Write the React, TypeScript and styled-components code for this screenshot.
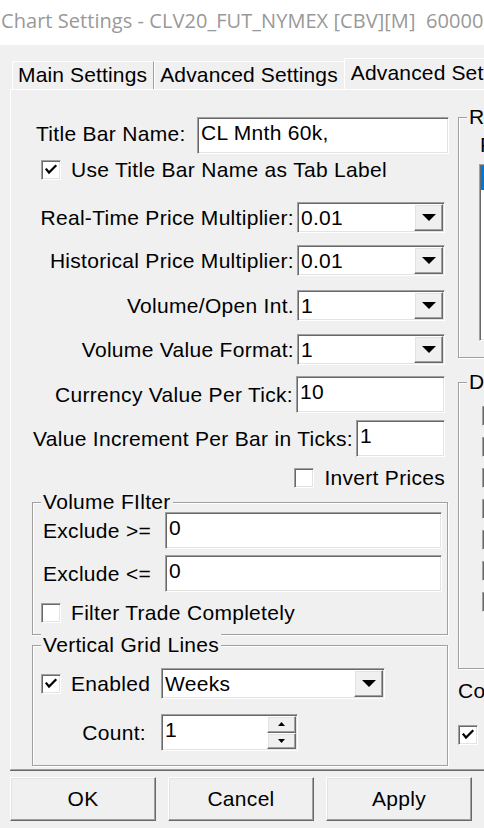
import styled, { createGlobalStyle, css } from 'styled-components';

const GlobalStyle = createGlobalStyle`
  html, body {
    margin: 0;
    padding: 0;
    background: #f0f0f0;
  }
  body {
    font-family: "Liberation Sans", Arial, sans-serif;
  }
`;

// classic 3D edges
const sunken = css`
  border: 1px solid;
  border-color: #a0a0a0 #ffffff #ffffff #a0a0a0;
  box-shadow: inset 1px 1px 0 #696969, inset -1px -1px 0 #e3e3e3;
`;

const raised = css`
  border: 1px solid;
  border-color: #ffffff #696969 #696969 #ffffff;
  box-shadow: inset -1px -1px 0 #a0a0a0, inset 1px 1px 0 #e3e3e3;
`;

const Window = styled.div`
  width: 484px;
  height: 828px;
  overflow: hidden;
  background: #f0f0f0;
  color: #000;
  font-family: "Liberation Sans", Arial, sans-serif;
  font-size: 21px;
  letter-spacing: 0.3px;
  display: flex;
  flex-direction: column;
`;

const TitleBar = styled.div`
  flex: none;
  height: 45px;
  box-sizing: border-box;
  padding: 8px 0 0 1px;
  background: #fff;
  color: #999;
  font-family: "Open Sans", "Noto Sans", sans-serif;
  font-size: 20px;
  letter-spacing: 0.05px;
  line-height: 26px;
  white-space: pre;
  overflow: hidden;
`;

const TabStrip = styled.div`
  flex: none;
  height: 44px;
  box-sizing: border-box;
  padding-left: 12px;
  display: flex;
  align-items: flex-end;
  letter-spacing: 0.15px;
`;

const Tab = styled.div<{ $active?: boolean }>`
  flex: none;
  box-sizing: border-box;
  height: ${p => (p.$active ? 31 : 28)}px;
  line-height: ${p => (p.$active ? 27 : 26)}px;
  padding: 0 ${p => (p.$active ? 0 : 6)}px 0 ${p => (p.$active ? 6 : 5)}px;
  margin-left: ${p => (p.$active ? -1 : 0)}px;
  white-space: nowrap;
  border-top: 1px solid #fff;
  border-left: 1px solid #fff;
  border-right: 1px solid #a0a0a0;
`;

const TabPanel = styled.div`
  flex: none;
  height: 681px;
  box-sizing: border-box;
  margin-left: 10px;
  display: flex;
  border-top: 1px solid #fff;
  border-left: 1px solid #fff;
  border-bottom: 1px solid #a0a0a0;
  box-shadow: 0 1px 0 #696969;
`;

const MainColumn = styled.div`
  flex: none;
  width: 439px;
  padding-top: 27px;
  display: flex;
  flex-direction: column;
`;

const SideColumn = styled.div`
  flex: none;
  width: 140px;
  padding: 27px 0 0 8px;
  display: flex;
  flex-direction: column;
`;

const FormRow = styled.div<{ $top: number; $left?: number; $right?: number; $end?: boolean; $gap?: number }>`
  display: flex;
  align-items: center;
  justify-content: ${p => (p.$end ? 'flex-end' : 'flex-start')};
  gap: ${p => p.$gap ?? 3}px;
  margin-top: ${p => p.$top}px;
  padding-left: ${p => p.$left ?? 0}px;
  padding-right: ${p => p.$right ?? 0}px;
`;

const Label = styled.span<{ $raise?: number }>`
  white-space: nowrap;
  line-height: 21px;
  margin-top: ${p => -2 * (p.$raise ?? 0)}px;
`;

const TextBox = styled.div<{ $width: number; $push?: boolean }>`
  ${sunken};
  flex: none;
  box-sizing: border-box;
  width: ${p => p.$width}px;
  height: 37px;
  padding: 4px 2px 0 3px;
  margin-left: ${p => (p.$push ? 'auto' : '0')};
  background: #fff;
  line-height: 21px;
  white-space: nowrap;
  overflow: hidden;
`;

const Combo = styled.div<{ $width: number; $push?: boolean }>`
  ${sunken};
  flex: none;
  box-sizing: border-box;
  width: ${p => p.$width}px;
  height: 31px;
  padding: 1px;
  margin-left: ${p => (p.$push ? 'auto' : '0')};
  background: #fff;
  display: flex;
`;

const ComboText = styled.span`
  flex: 1;
  padding-left: 2px;
  line-height: 27px;
  white-space: nowrap;
  overflow: hidden;
`;

const DropButton = styled.span`
  ${raised};
  flex: none;
  box-sizing: border-box;
  width: 29px;
  height: 27px;
  background: #f0f0f0;
  display: flex;
  align-items: center;
  justify-content: center;
`;

const SpinBox = styled.div`
  ${sunken};
  flex: none;
  box-sizing: border-box;
  width: 137px;
  height: 37px;
  padding: 1px;
  background: #fff;
  display: flex;
`;

const SpinText = styled.span`
  flex: 1;
  padding: 3px 0 0 2px;
  line-height: 21px;
`;

const SpinButtons = styled.span`
  flex: none;
  width: 29px;
  display: flex;
  flex-direction: column;
`;

const SpinButton = styled.span`
  ${raised};
  flex: 1;
  box-sizing: border-box;
  background: #f0f0f0;
  display: flex;
  align-items: center;
  justify-content: center;
`;

const CheckRow = styled.label<{ $top: number; $left: number; $right?: number; $bottom?: number; $end?: boolean }>`
  display: flex;
  align-items: center;
  justify-content: ${p => (p.$end ? 'flex-end' : 'flex-start')};
  gap: 10px;
  height: 20px;
  margin-top: ${p => p.$top}px;
  margin-bottom: ${p => p.$bottom ?? 0}px;
  padding-left: ${p => p.$left}px;
  padding-right: ${p => p.$right ?? 0}px;
  line-height: 20px;
  white-space: nowrap;
`;

const Box = styled.span`
  ${sunken};
  flex: none;
  box-sizing: border-box;
  width: 20px;
  height: 20px;
  background: #fff;
  display: flex;
  align-items: center;
  justify-content: center;
`;

const GroupBox = styled.div<{ $top: number; $left: number; $width: number; $height?: number }>`
  position: relative;
  flex: none;
  box-sizing: border-box;
  margin-top: ${p => p.$top}px;
  margin-left: ${p => p.$left}px;
  width: ${p => p.$width}px;
  ${p => (p.$height ? `height: ${p.$height}px;` : '')}
  border: 1px solid #a0a0a0;
  box-shadow: inset 1px 1px 0 #fff, 1px 1px 0 #fff;
  display: flex;
  flex-direction: column;
`;

const GroupTitle = styled.span`
  position: absolute;
  top: -12px;
  left: 8px;
  padding: 0 2px;
  background: #f0f0f0;
  line-height: 21px;
  white-space: nowrap;
`;

const SideLabel = styled.span<{ $top: number; $left: number }>`
  margin-top: ${p => p.$top}px;
  padding-left: ${p => p.$left}px;
  line-height: 21px;
  white-space: nowrap;
`;

const ListBox = styled.div`
  ${sunken};
  box-sizing: border-box;
  margin: 9px 0 0 20px;
  height: 177px;
  padding: 1px;
  background: #fff;
`;

const ListItem = styled.div<{ $selected?: boolean }>`
  height: 24px;
  background: ${p => (p.$selected ? '#0078d7' : 'transparent')};
`;

const CheckStack = styled.div`
  display: flex;
  flex-direction: column;
  gap: 11px;
  padding: 23px 0 0 23px;
`;

const ButtonRow = styled.div`
  flex: none;
  display: flex;
  gap: 12px;
  margin-top: 7px;
  padding-left: 10px;
`;

const PushButton = styled.button`
  ${raised};
  flex: none;
  box-sizing: border-box;
  width: 146px;
  height: 44px;
  padding: 0;
  background: #f0f0f0;
  color: #000;
  font: inherit;
  letter-spacing: inherit;
`;

function Arrow({ size, up }: { size: 'large' | 'small'; up?: boolean }) {
  const w = size === 'large' ? 14 : 7;
  const h = size === 'large' ? 7 : 4;
  const points = up ? `0,${h} ${w / 2},0 ${w},${h}` : `0,0 ${w},0 ${w / 2},${h}`;
  return (
    <svg width={w} height={h} viewBox={`0 0 ${w} ${h}`}>
      <polygon points={points} fill="#000" />
    </svg>
  );
}

function CheckBox({ checked }: { checked?: boolean }) {
  return (
    <Box>
      {checked && (
        <svg width="14" height="14" viewBox="0 0 14 14">
          <polyline points="2.5,6.5 5,9.5 11.5,3" fill="none" stroke="#000" strokeWidth="2.2" strokeLinecap="square" />
        </svg>
      )}
    </Box>
  );
}

function ComboBox({ value, width, push }: { value: string; width: number; push?: boolean }) {
  return (
    <Combo $width={width} $push={push}>
      <ComboText>{value}</ComboText>
      <DropButton>
        <Arrow size="large" />
      </DropButton>
    </Combo>
  );
}

export default function App() {
  return (
    <Window>
      <GlobalStyle />
      <TitleBar>{'Chart Settings - CLV20_FUT_NYMEX [CBV][M]  60000'}</TitleBar>

      <TabStrip>
        <Tab>Main Settings</Tab>
        <Tab>Advanced Settings</Tab>
        <Tab $active>Advanced Settings 2</Tab>
      </TabStrip>

      <TabPanel>
        <MainColumn>
          <FormRow $top={0} $left={25} $right={1}>
            <Label $raise={2}>Title Bar Name:</Label>
            <TextBox $width={252} $push>CL Mnth 60k,</TextBox>
          </FormRow>
          <CheckRow $top={6} $left={30}>
            <CheckBox checked />
            Use Title Bar Name as Tab Label
          </CheckRow>

          <FormRow $top={22} $right={5} $end>
            <Label>Real-Time Price Multiplier:</Label>
            <ComboBox value="0.01" width={148} />
          </FormRow>
          <FormRow $top={12} $right={5} $end>
            <Label>Historical Price Multiplier:</Label>
            <ComboBox value="0.01" width={148} />
          </FormRow>
          <FormRow $top={14} $right={5} $end>
            <Label>Volume/Open Int.</Label>
            <ComboBox value="1" width={148} />
          </FormRow>
          <FormRow $top={13} $right={5} $end>
            <Label>Volume Value Format:</Label>
            <ComboBox value="1" width={148} />
          </FormRow>
          <FormRow $top={11} $right={5} $end>
            <Label>Currency Value Per Tick:</Label>
            <TextBox $width={149}>10</TextBox>
          </FormRow>
          <FormRow $top={7} $right={5} $end>
            <Label>Value Increment Per Bar in Ticks:</Label>
            <TextBox $width={89}>1</TextBox>
          </FormRow>
          <CheckRow $top={11} $left={0} $right={5} $end>
            <CheckBox />
            Invert Prices
          </CheckRow>

          <GroupBox $top={14} $left={21} $width={416}>
            <GroupTitle>Volume FIlter</GroupTitle>
            <FormRow $top={9} $left={10} $right={5}>
              <Label>Exclude &gt;=</Label>
              <TextBox $width={277} $push>0</TextBox>
            </FormRow>
            <FormRow $top={6} $left={10} $right={5}>
              <Label>Exclude &lt;=</Label>
              <TextBox $width={277} $push>0</TextBox>
            </FormRow>
            <CheckRow $top={11} $left={8} $bottom={11}>
              <CheckBox />
              Filter Trade Completely
            </CheckRow>
          </GroupBox>

          <GroupBox $top={10} $left={21} $width={416} $height={121}>
            <GroupTitle>Vertical Grid Lines</GroupTitle>
            <FormRow $top={22} $left={8} $right={62} $gap={10}>
              <CheckBox checked />
              <Label>Enabled</Label>
              <ComboBox value="Weeks" width={224} push />
            </FormRow>
            <FormRow $top={15} $right={149} $gap={15} $end>
              <Label>Count:</Label>
              <SpinBox>
                <SpinText>1</SpinText>
                <SpinButtons>
                  <SpinButton>
                    <Arrow size="small" up />
                  </SpinButton>
                  <SpinButton>
                    <Arrow size="small" />
                  </SpinButton>
                </SpinButtons>
              </SpinBox>
            </FormRow>
          </GroupBox>
        </MainColumn>

        <SideColumn>
          <GroupBox $top={0} $left={0} $width={140} $height={241}>
            <GroupTitle>R</GroupTitle>
            <SideLabel $top={16} $left={21}>F</SideLabel>
            <ListBox>
              <ListItem $selected />
            </ListBox>
          </GroupBox>
          <GroupBox $top={24} $left={0} $width={140} $height={287}>
            <GroupTitle>D</GroupTitle>
            <CheckStack>
              {Array.from({ length: 7 }, (_, i) => (
                <CheckBox key={i} />
              ))}
            </CheckStack>
          </GroupBox>
          <SideLabel $top={11} $left={0}>Co</SideLabel>
          <CheckRow $top={24} $left={0}>
            <CheckBox checked />
          </CheckRow>
        </SideColumn>
      </TabPanel>

      <ButtonRow>
        <PushButton>OK</PushButton>
        <PushButton>Cancel</PushButton>
        <PushButton>Apply</PushButton>
      </ButtonRow>
    </Window>
  );
}
